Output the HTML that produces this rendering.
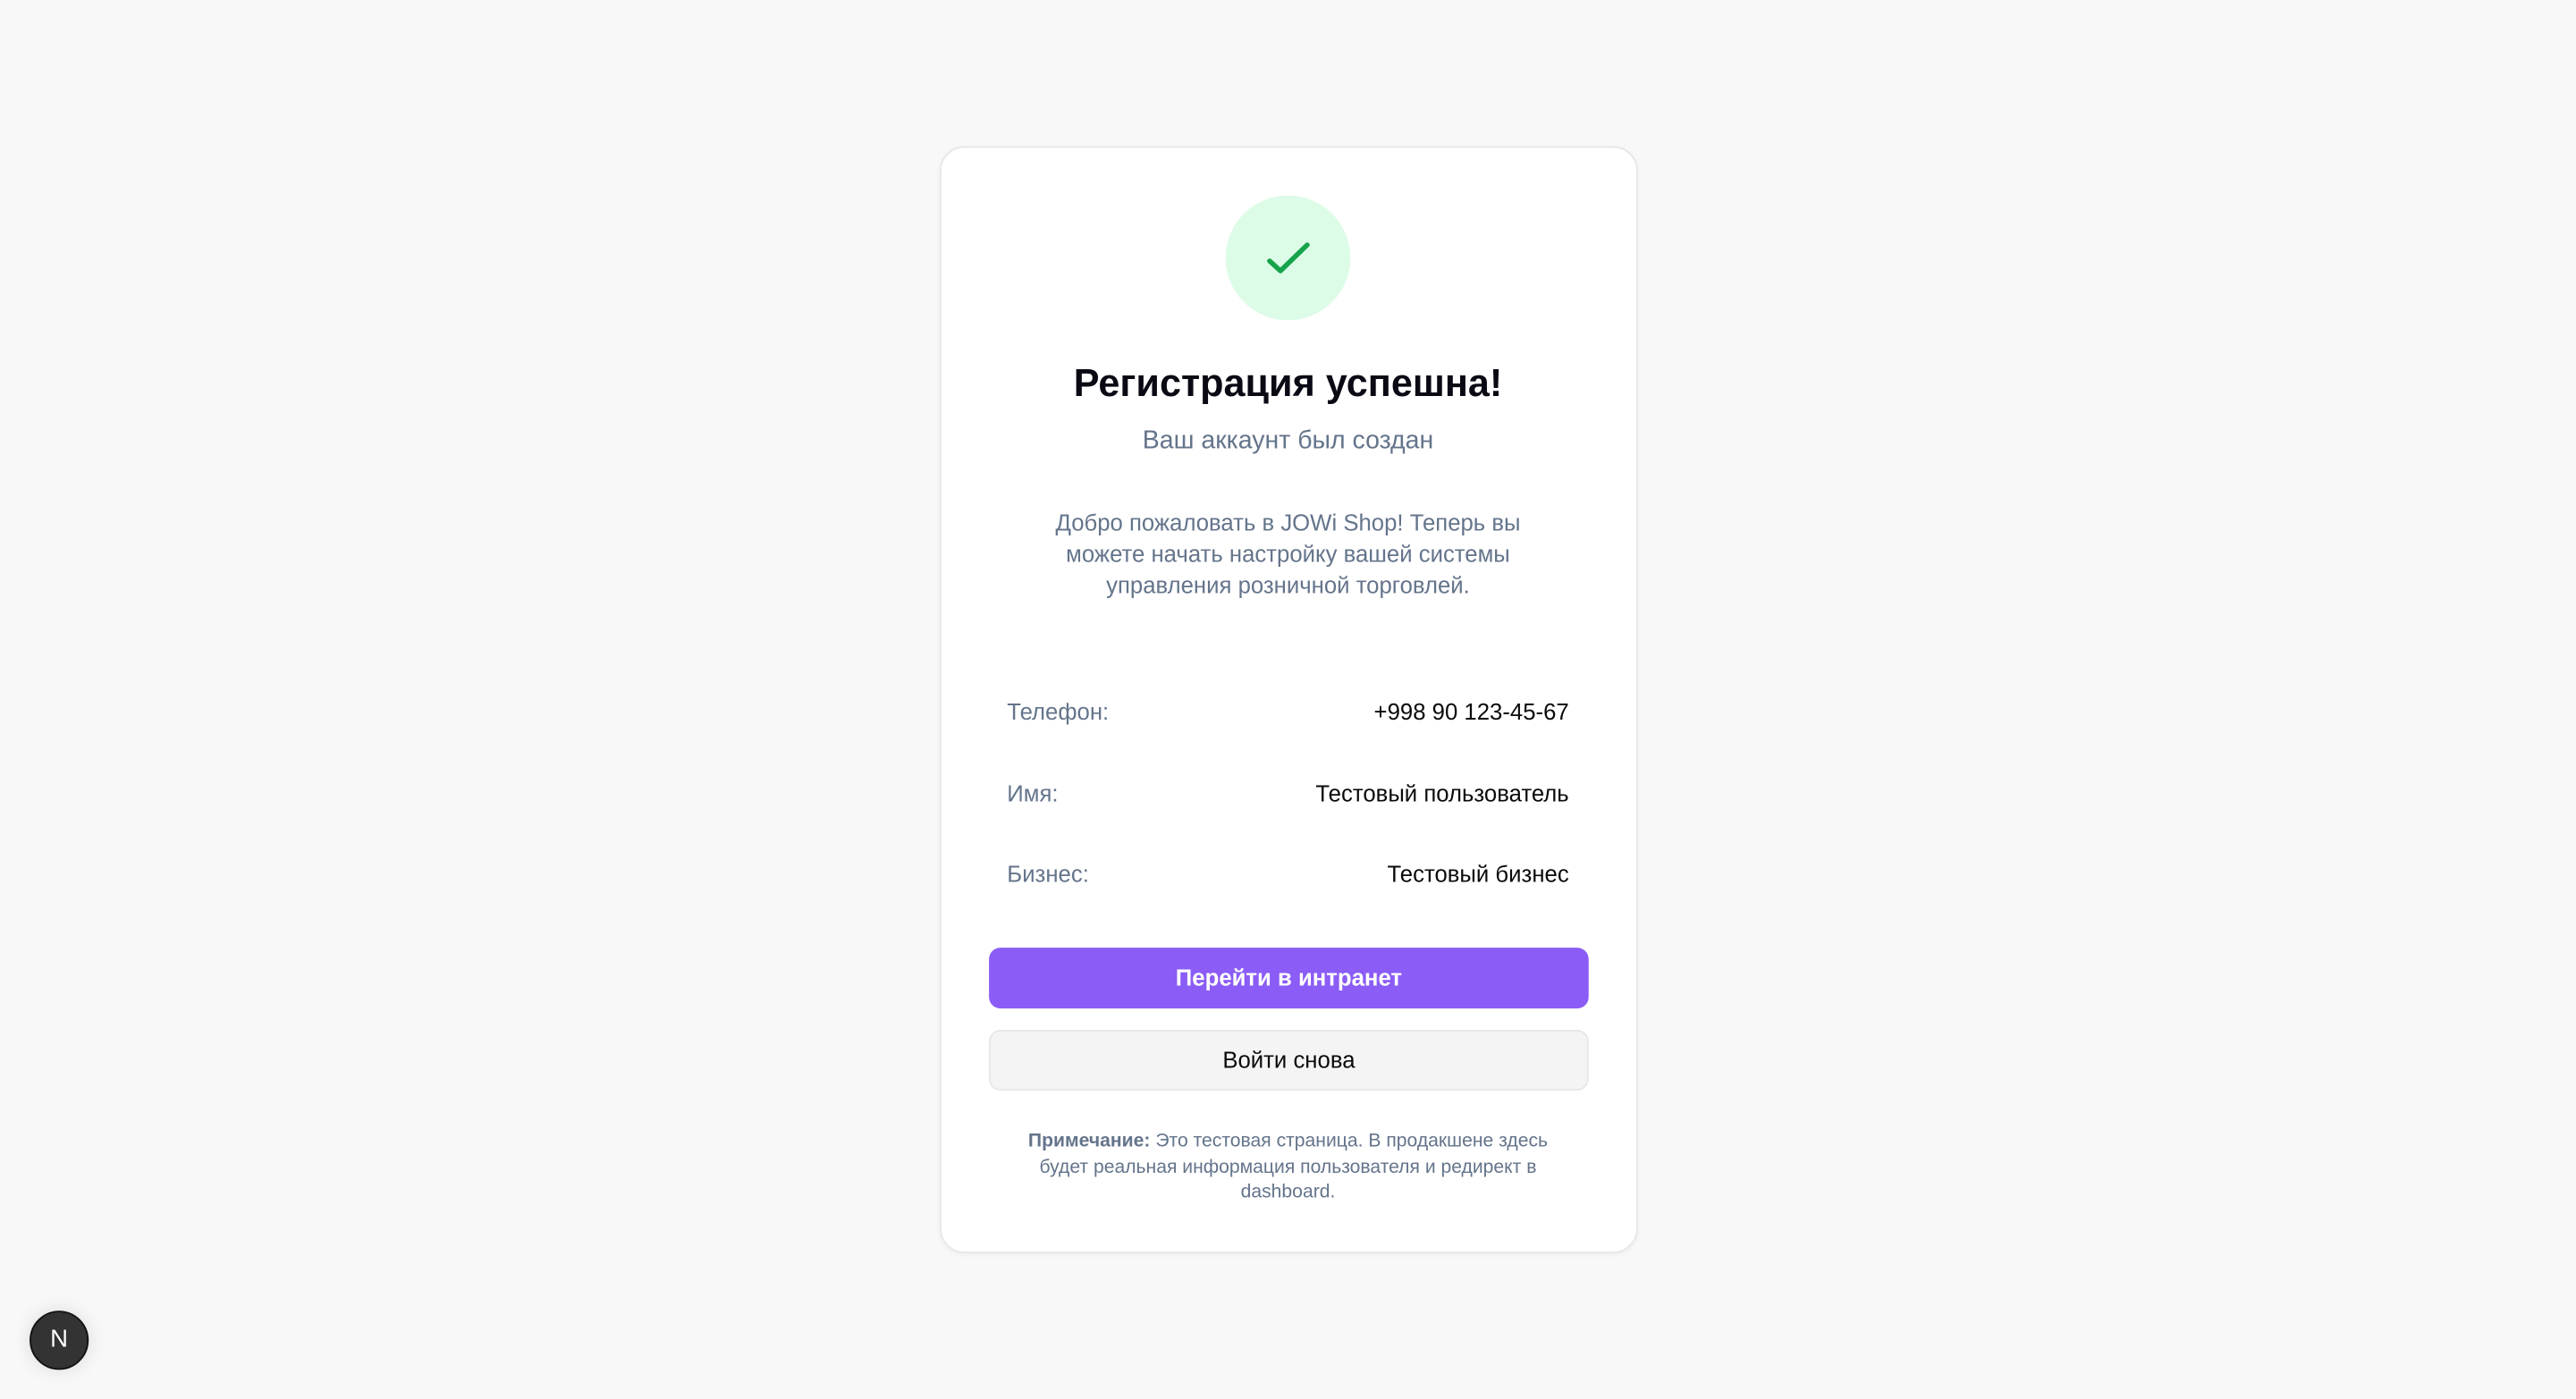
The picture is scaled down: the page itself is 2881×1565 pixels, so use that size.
<!DOCTYPE html>
<html><head><meta charset="utf-8"><style>
html,body{margin:0;padding:0;}
body{width:2881px;height:1565px;background:#f8f8f8;overflow:hidden;font-family:"Liberation Sans","Noto Sans CJK SC",sans-serif;}
#s{position:absolute;left:0;top:0;width:1568px;height:852px;transform:scale(1.83737);transform-origin:0 0;}
.card{position:absolute;left:572px;top:89px;width:423px;height:672px;background:#fff;border:1px solid #e5e7eb;border-radius:15px;box-shadow:0 1px 3px rgba(0,0,0,0.04);}
.t{position:absolute;left:0;width:1568px;text-align:center;white-space:nowrap;}
.lbl{position:absolute;left:613px;font-size:14px;color:#64748b;line-height:18px;}
.val{position:absolute;right:613px;font-size:14px;color:#0a0a0a;line-height:18px;text-align:right;}
</style></head><body><div id="s">
<div class="card"></div>
<svg style="position:absolute;left:746px;top:119px" width="76" height="76" viewBox="0 0 76 76">
<circle cx="38" cy="38" r="38" fill="#dcfce7"/>
<path d="M26.8 39.9 L33.4 45.9 L49.7 30.1" fill="none" stroke="#16a34a" stroke-width="3" stroke-linecap="round" stroke-linejoin="round"/>
</svg>
<div class="t" style="top:218px;font-size:23.5px;font-weight:bold;color:#0a0a14;line-height:30px">Регистрация успешна!</div>
<div class="t" style="top:259px;font-size:15.5px;color:#64748b;line-height:20px">Ваш аккаунт был создан</div>
<div class="t" style="top:309px;font-size:14px;color:#64748b;line-height:19px">Добро пожаловать в JOWi Shop! Теперь вы<br>можете начать настройку вашей системы<br>управления розничной торговлей.</div>
<div class="lbl" style="top:424px">Телефон:</div><div class="val" style="top:424px">+998 90 123-45-67</div>
<div class="lbl" style="top:474px">Имя:</div><div class="val" style="top:474px">Тестовый пользователь</div>
<div class="lbl" style="top:523px">Бизнес:</div><div class="val" style="top:523px">Тестовый бизнес</div>
<div style="position:absolute;left:602px;top:577px;width:365px;height:37px;background:#8b5cf6;border-radius:7px;color:#fff;font-size:14px;font-weight:bold;text-align:center;line-height:37px">Перейти в интранет</div>
<div style="position:absolute;left:602px;top:627px;width:363px;height:35px;background:#f4f4f5;border:1px solid #e5e7eb;border-radius:7px;color:#0a0a0a;font-size:14px;text-align:center;line-height:35px">Войти снова</div>
<div class="t" style="top:688px;font-size:11.5px;color:#64748b;line-height:15.5px"><b>Примечание:</b> Это тестовая страница. В продакшене здесь<br>будет реальная информация пользователя и редирект в<br>dashboard.</div>
<div style="position:absolute;left:18px;top:798px;width:34px;height:34px;border-radius:50%;background:#333;border:1px solid #111;box-shadow:0 0 12px rgba(0,0,0,0.12);color:#fff;font-size:15px;text-align:center;line-height:34px">N</div>
</div></body></html>
